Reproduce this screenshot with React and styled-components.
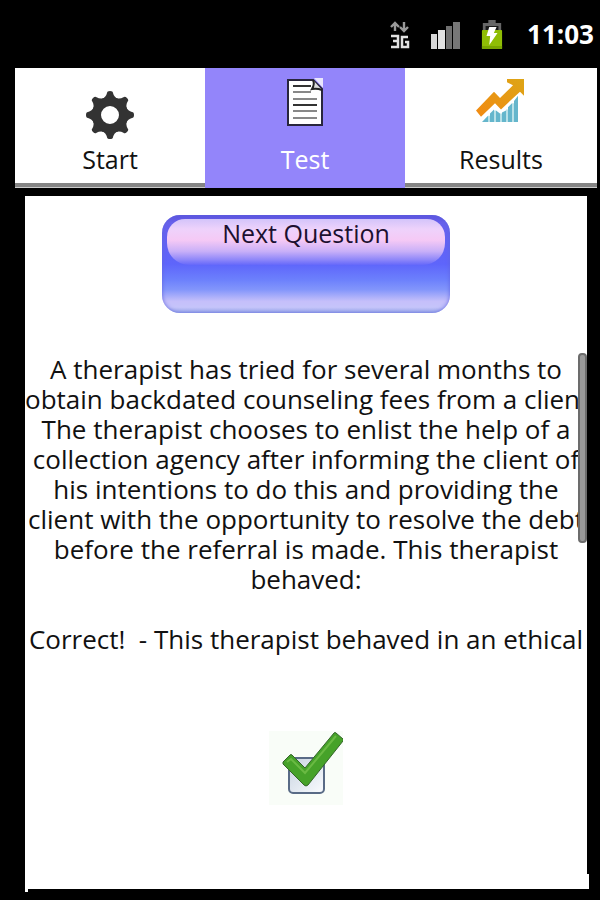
import React from "react";
import styled, { createGlobalStyle, css } from "styled-components";

const GlobalStyle = createGlobalStyle`
  * {
    box-sizing: border-box;
  }

  body {
    margin: 0;
    background: #000;
    color: #111;
    font-family: "Open Sans", "Noto Sans", sans-serif;
  }
`;

const Screen = styled.div`
  display: flex;
  flex-direction: column;
  min-height: 100vh;
  background: #000;
`;

const StatusBar = styled.header`
  display: flex;
  align-items: center;
  justify-content: flex-end;
  height: 68px;
  padding: 2px 6px 0 0;
  color: #fff;
`;

const StatusIcons = styled.div`
  display: flex;
  align-items: center;
  gap: 20px;
  margin-right: 24px;
`;

const Clock = styled.time`
  padding-bottom: 2px;
  font-size: 26px;
  font-weight: 700;
  line-height: 30px;
`;

const TabBar = styled.nav`
  display: grid;
  grid-template-columns: 190fr 200fr 192fr;
  height: 120px;
  margin: 0 3px 0 15px;
`;

const Tab = styled.button`
  display: flex;
  flex-direction: column;
  align-items: center;
  justify-content: flex-end;
  padding: 0 4px 14px;
  border: 0;
  background: #fff;
  color: #111;
  font: inherit;
  font-size: 25px;
  line-height: 30px;
  cursor: pointer;
  box-shadow: inset 0 -1px #ccc, inset 0 -5px #858585;

  ${({ $active }) =>
    $active &&
    css`
      background: #9385fa;
      color: #fff;
      box-shadow: none;
    `}
`;

const TabIcon = styled.span`
  display: flex;
  align-items: ${({ $low }) => ($low ? "flex-end" : "flex-start")};
  height: 63px;
  margin-bottom: 4px;
`;

const Content = styled.main`
  position: relative;
  display: flex;
  flex: 1;
  flex-direction: column;
  align-items: center;
  margin: 8px 13px 11px 25px;
  padding-top: 19px;
  background: #fff;

  /* frame corners that stick out at the bottom */
  &::before,
  &::after {
    content: "";
    position: absolute;
    background: #fff;
  }

  &::before {
    left: 0;
    bottom: -3px;
    width: 3px;
    height: 3px;
  }

  &::after {
    right: -2px;
    bottom: 0;
    width: 2px;
    height: 15px;
  }
`;

const NextButton = styled.button`
  display: flex;
  align-items: flex-start;
  width: 288px;
  height: 98px;
  padding: 4px 5px;
  border: 0;
  border-radius: 18px;
  background: linear-gradient(
    #5a50dd 0%,
    #6861ec 8%,
    #5e65fb 50%,
    #6c80fc 66%,
    #8295fb 76%,
    #c5bffa 88%,
    #c5c4fa 94%,
    #9eaee8 100%
  );
  box-shadow: inset 0 0 4px #6065e0;
  color: #1c1030;
  font: inherit;
  font-size: 25px;
  line-height: 28px;
  cursor: pointer;
`;

const Gloss = styled.span`
  flex: 1;
  height: 46px;
  border-radius: 18px 18px 22px 22px;
  background: linear-gradient(
    #d3c4fa 0%,
    #eed2fb 22%,
    #f5c9f5 46%,
    #c9b0f8 70%,
    #9088f9 88%,
    #6568fa 100%
  );
`;

const QuestionArea = styled.section`
  position: relative;
  width: 100%;
  margin-top: 40px;
  padding: 1px 0 9px;
  overflow: hidden;
`;

const QuestionText = styled.p`
  margin: 0;
  font-size: 26px;
  line-height: 30px;
  text-align: center;
  white-space: pre;

  & + & {
    margin-top: 30px;
  }
`;

const ScrollThumb = styled.span`
  position: absolute;
  top: 0;
  right: 0;
  width: 9px;
  height: 190px;
  border: 2px solid #6c6c6c;
  border-radius: 4px;
  background: #999;
`;

const ResultMark = styled.div`
  display: flex;
  margin-top: 68px;
  background: #f9fdf8;
`;

const question = `A therapist has tried for several months to
obtain backdated counseling fees from a client.
The therapist chooses to enlist the help of a
collection agency after informing the client of
his intentions to do this and providing the
client with the opportunity to resolve the debt
before the referral is made. This therapist
behaved:`;

const DataIcon = () => (
  <svg width="20" height="28" viewBox="0 0 20 28" fill="none">
    <path d="M5 10V3M1 6l4-4 4 4M14 1v8M10 6l4 4 4-4" stroke="#999" strokeWidth="2.4" />
    <path
      d="M1 15h7v11H1M3 20h5M18 16h-6v10h6v-5h-3"
      stroke="#e2e2e2"
      strokeWidth="2.5"
    />
  </svg>
);

const SignalIcon = () => (
  <svg width="31" height="28" viewBox="0 0 31 28">
    <path d="M1 13h6v15H1z" fill="#d8d8d8" />
    <path d="M8 9h7v19H8z" fill="#e2e2e2" />
    <path d="M16 5h6v23h-6z" fill="#707070" />
    <path d="M23 1h7v27h-7z" fill="#777" />
  </svg>
);

const BatteryIcon = () => (
  <svg width="22" height="30" viewBox="0 0 24 30" preserveAspectRatio="none">
    <path d="M8 0h8v3h6v9H2V3h6z" fill="#666" />
    <path d="M5 6h14v5H5z" fill="#171717" />
    <rect x="1" y="10" width="22" height="19" rx="1" fill="#8fbd05" />
    <path d="M1 26h22v3H1z" fill="#79a500" />
    <path d="M9 7h8l-3 6h4L9 25l1-9H6z" fill="#fff" />
  </svg>
);

const GearIcon = () => (
  <svg width="50" height="50" viewBox="0 0 50 50">
    <g fill="#333">
      <path
        fillRule="evenodd"
        d="M25 7a18 18 0 1 0 0 36 18 18 0 0 0 0-36zm0 9a9 9 0 1 1 0 18 9 9 0 0 1 0-18z"
      />
      {[0, 45, 90, 135, 180, 225, 270, 315].map((angle) => (
        <path
          key={angle}
          d="M17 9Q21 7 22 3Q22 1 25 1Q28 1 28 3Q29 7 33 9z"
          transform={`rotate(${angle} 25 25)`}
        />
      ))}
    </g>
  </svg>
);

const DocumentIcon = () => (
  <svg width="38" height="50" viewBox="0 0 38 50">
    <path d="M28 1h9v10z" fill="#e9e6fc" />
    <path d="M2 3h25l9 9v36H2z" fill="#fff" stroke="#29263d" strokeWidth="2" />
    <path d="M27 3q2 4-1 9 5-1 10 1" fill="#ddd" stroke="#222" strokeWidth="2" />
    <path d="M7 9h18M7 28h24" stroke="#333" strokeWidth="2" />
    <path d="M7 15h18M7 22h24M7 34h24M7 41h24" stroke="#888" strokeWidth="2" />
  </svg>
);

const ChartIcon = () => (
  <svg width="50" height="46" viewBox="0 -1 50 44" preserveAspectRatio="none">
    <defs>
      <linearGradient id="arrow" x1="0" y1="1" x2="1" y2="0">
        <stop offset="0" stopColor="#f28a13" />
        <stop offset="1" stopColor="#dda515" />
      </linearGradient>
    </defs>
    <path
      d="M6 42l6-6v6zM14 42V34l4-4v12zM20 42V31l4 3v8zM26 42V33l4-2v11zM32 42V28l4-4v18zM38 42V22l4-5v25z"
      fill="#65b6cc"
    />
    <path d="M13 36v6M19 31v11M25 34v8M31 30v12M37 24v18" stroke="#b9e1e8" strokeWidth="2" />
    <path d="M0 31L18 13l6 6L37 7l-6-3V1h17v16l-4-4-19 17-6-6L5 37z" fill="url(#arrow)" />
  </svg>
);

const CheckIcon = () => (
  <svg width="74" height="74" viewBox="0 0 74 74" role="img" aria-label="Correct">
    <defs>
      <linearGradient id="box" x2="1" y2="1">
        <stop offset="0" stopColor="#c7d2df" />
        <stop offset="1" stopColor="#fafcff" />
      </linearGradient>
    </defs>
    <rect x="20" y="27" width="35" height="35" rx="4" fill="url(#box)" stroke="#596b86" strokeWidth="2" />
    <path
      d="M14 31l7-7q1-1 2 0l13 13L65 2q1-1 2 0l7 6q1 1 0 2L39 54q-2 2-4 0L14 33z"
      fill="#46a229"
      stroke="#34652a"
      strokeWidth="1"
    />
    <path d="M18 31l4-3 14 14L67 5" fill="none" stroke="#6aba43" strokeWidth="2" />
  </svg>
);

const App = () => {
  return (
    <>
      <GlobalStyle />
      <Screen>
        <StatusBar>
          <StatusIcons>
            <DataIcon />
            <SignalIcon />
            <BatteryIcon />
          </StatusIcons>
          <Clock>11:03</Clock>
        </StatusBar>

        <TabBar>
          <Tab type="button">
            <TabIcon $low>
              <GearIcon />
            </TabIcon>
            Start
          </Tab>
          <Tab type="button" $active aria-current="page">
            <TabIcon>
              <DocumentIcon />
            </TabIcon>
            Test
          </Tab>
          <Tab type="button">
            <TabIcon>
              <ChartIcon />
            </TabIcon>
            Results
          </Tab>
        </TabBar>

        <Content>
          <NextButton type="button">
            <Gloss>Next Question</Gloss>
          </NextButton>

          <QuestionArea>
            <QuestionText>{question}</QuestionText>
            <QuestionText>Correct!  - This therapist behaved in an ethical</QuestionText>
            <ScrollThumb />
          </QuestionArea>

          <ResultMark>
            <CheckIcon />
          </ResultMark>
        </Content>
      </Screen>
    </>
  );
};

export default App;
